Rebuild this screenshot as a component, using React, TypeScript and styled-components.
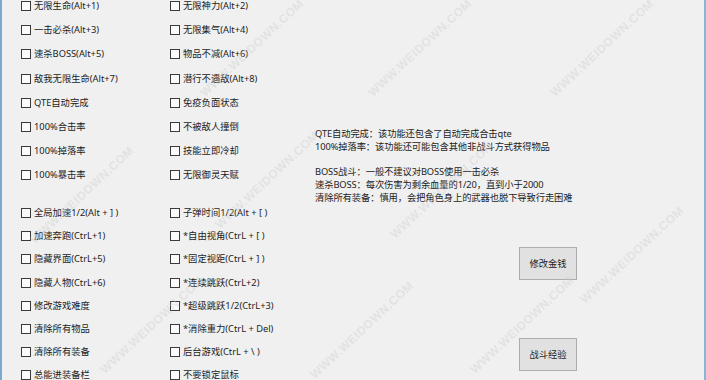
import React from "react";
import styled, { createGlobalStyle } from "styled-components";

const Global = createGlobalStyle`
  html, body { margin: 0; padding: 0; background: #f0f0f0; }
  body { width: 706px; height: 380px; overflow: hidden; }
`;

const Window = styled.div`
  position: relative;
  box-sizing: border-box;
  width: 706px;
  height: 380px;
  overflow: hidden;
  background: #f0f0f0;
  border-left: 2px solid #79aad2;
  border-right: 2px solid #86b6d8;
  display: grid;
  grid-template-columns: 313px 1fr;
  font-family: "Noto Sans", "Noto Sans CJK SC", sans-serif;
  font-size: 9.3px;
  color: #1c1c1c;
`;

const Options = styled.div`
  display: flex;
  flex-direction: column;
  gap: 14px;
  margin-top: -6px;
  padding-left: 19px;
`;

const Group = styled.div<{ $row: number }>`
  display: grid;
  grid-template-columns: 149px 1fr;
  grid-auto-rows: ${(p) => p.$row}px;
`;

const Item = styled.label`
  display: flex;
  align-items: center;
  gap: 3px;
  white-space: nowrap;
  line-height: 12px;
`;

const Box = styled.span`
  box-sizing: border-box;
  width: 10px;
  height: 10px;
  flex: none;
  border: 1px solid #3a3a3a;
  background: #fbfbfb;
`;

const Info = styled.div`
  display: flex;
  flex-direction: column;
  padding-top: 128px;
`;

const Notes = styled.div`
  line-height: 12.8px;
  white-space: nowrap;
  letter-spacing: -0.1px;
`;

const Line = styled.div`
  height: 12.8px;
`;

const Buttons = styled.div`
  display: flex;
  flex-direction: column;
  gap: 58px;
  padding-left: 204px;
  margin-top: 42px;
`;

const Button = styled.button`
  box-sizing: border-box;
  width: 58px;
  height: 33px;
  padding: 0;
  background: #e1e1e1;
  border: 1px solid #adadad;
  font-family: inherit;
  font-size: 9.3px;
  color: #1c1c1c;
`;

const Watermark = styled.span`
  position: absolute;
  transform: translate(-50%, -50%) rotate(-43deg);
  font-family: "Liberation Sans", sans-serif;
  font-weight: bold;
  font-size: 12px;
  letter-spacing: 0.5px;
  color: rgba(200, 200, 200, 0.35);
  pointer-events: none;
  white-space: nowrap;
`;

const top = [
  ["无限生命(Alt+1)", "无限神力(Alt+2)"],
  ["一击必杀(Alt+3)", "无限集气(Alt+4)"],
  ["速杀BOSS(Alt+5)", "物品不减(Alt+6)"],
  ["敌我无限生命(Alt+7)", "潜行不遇敌(Alt+8)"],
  ["QTE自动完成", "免疫负面状态"],
  ["100%合击率", "不被敌人撞倒"],
  ["100%掉落率", "技能立即冷却"],
  ["100%暴击率", "无限御灵天赋"],
];

const bottom = [
  ["全局加速1/2(Alt + ] )", "子弹时间1/2(Alt + [ )"],
  ["加速奔跑(CtrL+1)", "*自由视角(CtrL + [ )"],
  ["隐藏界面(CtrL+5)", "*固定视距(CtrL + ] )"],
  ["隐藏人物(CtrL+6)", "*连续跳跃(CtrL+2)"],
  ["修改游戏难度", "*超级跳跃1/2(CtrL+3)"],
  ["清除所有物品", "*消除重力(CtrL + Del)"],
  ["清除所有装备", "后台游戏(CtrL + \\ )"],
  ["总能进装备栏", "不要锁定鼠标"],
];

const notes = [
  "QTE自动完成：该功能还包含了自动完成合击qte",
  "100%掉落率：该功能还可能包含其他非战斗方式获得物品",
  "",
  "BOSS战斗：一般不建议对BOSS使用一击必杀",
  "速杀BOSS：每次伤害为剩余血量的1/20，直到小于2000",
  "清除所有装备：慎用，会把角色身上的武器也脱下导致行走困难",
];

const marks: [number, number][] = [
  [250, 48], [418, 48], [600, 48],
  [80, 195], [265, 180], [440, 190], [630, 255],
  [150, 325], [360, 330], [520, 325],
];

function Check({ label }: { label: string }) {
  return (
    <Item>
      <Box />
      <span>{label}</span>
    </Item>
  );
}

export default function App() {
  return (
    <>
      <Global />
      <Window>
        <Options>
          <Group $row={24.2}>
            {top.flat().map((t) => (
              <Check key={t} label={t} />
            ))}
          </Group>
          <Group $row={23.2}>
            {bottom.flat().map((t) => (
              <Check key={t} label={t} />
            ))}
          </Group>
        </Options>
        <Info>
          <Notes>
            {notes.map((n, i) => (
              <Line key={i}>{n}</Line>
            ))}
          </Notes>
          <Buttons>
            <Button>修改金钱</Button>
            <Button>战斗经验</Button>
          </Buttons>
        </Info>
        {marks.map(([x, y], i) => (
          <Watermark key={i} style={{ left: x, top: y }}>
            WWW.WEIDOWN.COM
          </Watermark>
        ))}
      </Window>
    </>
  );
}
